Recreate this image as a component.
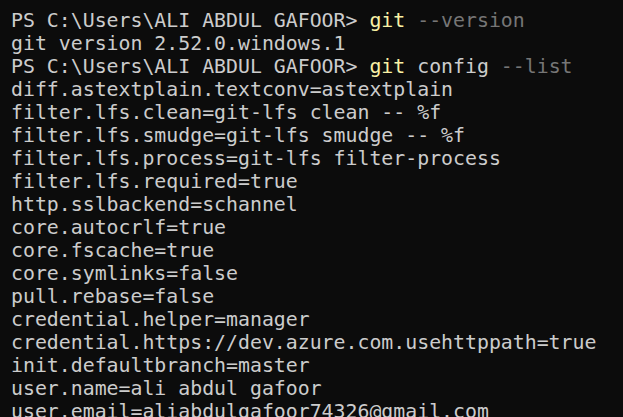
export default function App() {
  const lines = [
    "diff.astextplain.textconv=astextplain",
    "filter.lfs.clean=git-lfs clean -- %f",
    "filter.lfs.smudge=git-lfs smudge -- %f",
    "filter.lfs.process=git-lfs filter-process",
    "filter.lfs.required=true",
    "http.sslbackend=schannel",
    "core.autocrlf=true",
    "core.fscache=true",
    "core.symlinks=false",
    "pull.rebase=false",
    "credential.helper=manager",
    "credential.https://dev.azure.com.usehttppath=true",
    "init.defaultbranch=master",
    "user.name=ali abdul gafoor",
    "user.email=aliabdulgafoor74326@gmail.com",
  ];
  return (
    <div className="h-[417px] w-full overflow-hidden bg-[#0c0c0c] pt-[9px] pl-[11px] text-[#cccccc] text-[19.85px] leading-[23px] whitespace-pre font-['DejaVu_Sans_Mono',monospace]">
      <div>
        PS C:\Users\ALI ABDUL GAFOOR&gt; <span className="text-[#f9f1a5]">git</span>{" "}
        <span className="text-[#767676]">--version</span>
      </div>
      <div>git version 2.52.0.windows.1</div>
      <div>
        PS C:\Users\ALI ABDUL GAFOOR&gt; <span className="text-[#f9f1a5]">git</span> config{" "}
        <span className="text-[#767676]">--list</span>
      </div>
      {lines.map((l, i) => (
        <div key={i}>{l}</div>
      ))}
    </div>
  );
}
